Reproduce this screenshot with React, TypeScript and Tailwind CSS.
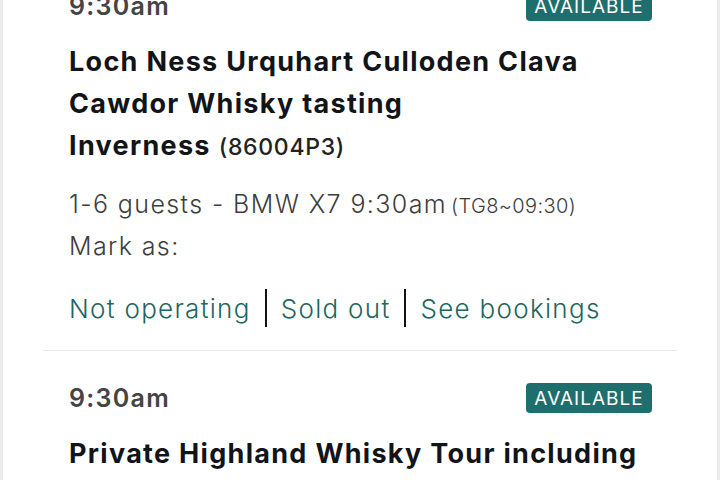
import React from "react";

interface Slot {
  time: string;
  title: string;
  code?: string;
  guests?: string;
  ref?: string;
}

const slots: Slot[] = [
  {
    time: "9:30am",
    title: "Loch Ness Urquhart Culloden Clava Cawdor Whisky tasting Inverness",
    code: "86004P3",
    guests: "1-6 guests - BMW X7 9:30am",
    ref: "TG8~09:30",
  },
  {
    time: "9:30am",
    title: "Private Highland Whisky Tour including Distillery Visit",
  },
];

function SlotItem({ slot, first }: { slot: Slot; first?: boolean }) {
  return (
    <div className={first ? "border-b border-[#e8e8e8]" : ""}>
      <div className={first ? "px-[26px] pb-[22px] pt-0" : "px-[26px] pt-[32px]"}>
        <div className="flex h-[30px] items-center justify-between">
          <span className="text-[25px] font-semibold leading-none tracking-[1.3px] text-[#444]">{slot.time}</span>
          <span className="mr-[-1px] flex h-[30px] w-[126px] items-center justify-center rounded-[4px] bg-[#1f6e6e] text-[19px] leading-none tracking-[1px] text-white">
            AVAILABLE
          </span>
        </div>
        <h2 className="mt-[20px] w-[580px] text-[27px] font-bold leading-[42px] tracking-[1.3px] text-[#111418]">
          {slot.title}
          {slot.code && (
            <span className="ml-[8px] text-[23px] font-medium tracking-[0.7px] text-[#222]">({slot.code})</span>
          )}
        </h2>
        {slot.guests && (
          <>
            <p className="mt-[16px] text-[25px] font-light leading-[40px] tracking-[1.4px] text-[#3d3d3d]">
              {slot.guests}
              <span className="ml-[4px] text-[20px] tracking-[0.4px]">({slot.ref})</span>
            </p>
            <p className="text-[25px] font-light leading-[40px] tracking-[1.4px] text-[#3d3d3d]">Mark as:</p>
            <div className="mt-[22px] flex h-[40px] items-center text-[26px] font-light tracking-[1.3px] text-[#1d6660]">
              <span>Not operating</span>
              <span className="mx-[14px] h-[38px] w-[2px] bg-[#111]" />
              <span>Sold out</span>
              <span className="mx-[14px] h-[38px] w-[2px] bg-[#111]" />
              <span>See bookings</span>
            </div>
          </>
        )}
      </div>
    </div>
  );
}

export default function App() {
  return (
    <div className="h-[480px] w-[720px] overflow-hidden bg-[#ececec] px-[3px]" style={{ fontFamily: "Inter, 'Noto Sans', sans-serif" }}>
      <div className="flow-root h-full bg-white px-[40px]">
        <div className="mt-[-9px]">
          {slots.map((s, i) => (
            <SlotItem key={i} slot={s} first={i === 0} />
          ))}
        </div>
      </div>
    </div>
  );
}
